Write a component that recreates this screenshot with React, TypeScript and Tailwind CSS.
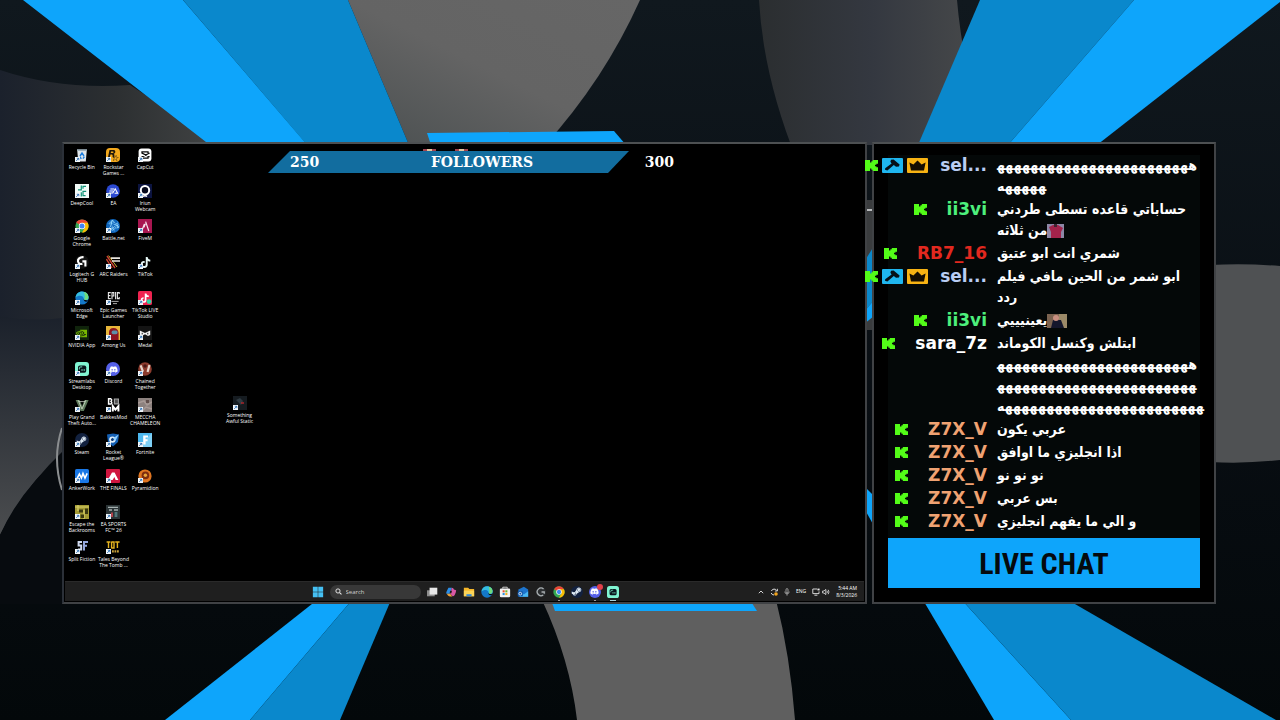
import type { ReactNode } from 'react';
import { FaBattleNet, FaDiscord, FaSteamSymbol, FaTiktok } from 'react-icons/fa6';
import { SiNvidia, SiRockstargames } from 'react-icons/si';

type Shortcut = {
  label: string[];
  icon: ReactNode;
};

type ChatMessage = {
  user: string;
  color: string;
  staff?: boolean;
  lines: string[];
  emote?: 'red' | 'dark';
};

const HEH = 'ه';
const JOINER = '\u200d';

function Tile({ className, children }: { className: string; children?: ReactNode }) {
  return (
    <span className={`flex size-full items-center justify-center overflow-hidden ${className}`}>{children}</span>
  );
}

function Glyph({ children }: { children: ReactNode }) {
  return (
    <svg viewBox="0 0 14 14" className="size-full" aria-hidden="true">
      {children}
    </svg>
  );
}

function ChromeIcon() {
  return (
    <Glyph>
      <circle cx="7" cy="7" r="6.6" fill="#34a853" />
      <path d="M7 7 L1.3 3.7 A6.6 6.6 0 0 1 12.7 3.7 Z" fill="#ea4335" />
      <path d="M7 3.7 H12.7 A6.6 6.6 0 0 1 7 13.6 L10 8.6 Z" fill="#fbbc05" />
      <circle cx="7" cy="7" r="3.2" fill="#fff" />
      <circle cx="7" cy="7" r="2.5" fill="#4285f4" />
    </Glyph>
  );
}

function EdgeIcon() {
  return (
    <Glyph>
      <circle cx="7" cy="7" r="6.6" fill="#1478c8" />
      <path d="M0.5 6.5 C1 2.5 4 0.4 7 0.4 C11 0.4 13.6 3.4 13.6 6.2 C13.6 8.6 11.8 9.6 9.8 9.4 C8 9.2 9 8.4 8.6 7 C7.6 4 3 4 0.5 6.5 Z" fill="#35bde0" />
      <path d="M8.7 7.6 C8 10.5 11 11.6 13.4 10 C12.4 8.7 9 10 8.7 7.6 Z" fill="#050c14" />
      <path d="M9 1 C13 1.8 13.8 5.2 13.2 7.6 C12 9.4 9.6 9.2 9.2 8.6 C10.6 6 9.4 3 9 1 Z" fill="#6fdc7b" />
    </Glyph>
  );
}

function StreamlabsIcon() {
  return (
    <Glyph>
      <rect width="14" height="14" rx="3" fill="#80f5d2" />
      <rect x="3" y="3.4" width="8.2" height="7.4" rx="1.8" fill="#09161d" />
      <path d="M4.4 7.4 V6.2 Q4.4 4.9 5.8 4.9 H7.2" fill="none" stroke="#80f5d2" strokeWidth="0.9" />
      <path d="M7 7.2 V8.8 M9.2 7.2 V8.8" stroke="#80f5d2" strokeWidth="1" />
    </Glyph>
  );
}

function DiscordIcon() {
  return (
    <Tile className="rounded-full bg-[#5560e8]">
      <FaDiscord className="size-[9px] text-white" />
    </Tile>
  );
}

function SteamIcon() {
  return (
    <Tile className="rounded-full bg-[#12213f]">
      <FaSteamSymbol className="size-[11px] text-[#dce8f2]" />
    </Tile>
  );
}

const shortcuts: Shortcut[] = [
  {
    label: ['Recycle Bin'],
    icon: (
      <Glyph>
        <path d="M2.2 2 H11.8 L10.8 13.4 H3.2 Z" fill="#dfe6ea" />
        <path d="M2 1.2 H12 V3 H2 Z" fill="#9fb0ba" />
        <path d="M5 8 L7 5 L9 8 M9.4 8.6 L8 10.6 M4.8 9 L6.4 10.8" fill="none" stroke="#1d7fe0" strokeWidth="1.4" />
      </Glyph>
    ),
  },
  {
    label: ['DeepCool'],
    icon: (
      <Glyph>
        <rect width="14" height="14" fill="#f2fbf8" />
        <path d="M6.3 1.6 V5.8 H3 M6.3 8.2 V12.4 M8 4.8 V2.4 H11 M11.2 7.4 H8 V11.6 H10.6" fill="none" stroke="#119478" strokeWidth="1.2" />
      </Glyph>
    ),
  },
  { label: ['Google', 'Chrome'], icon: <ChromeIcon /> },
  {
    label: ['Logitech G', 'HUB'],
    icon: (
      <Glyph>
        <circle cx="7" cy="7" r="6.8" fill="#121212" />
        <path d="M8.6 2.2 C4.6 1.8 2.6 4.4 3 6.4 C3.4 8.8 5.6 9.4 7.4 8.8 M7.4 6.4 H10.4 V11.4" fill="none" stroke="#fff" strokeWidth="2.1" />
      </Glyph>
    ),
  },
  { label: ['Microsoft', 'Edge'], icon: <EdgeIcon /> },
  {
    label: ['NVIDIA App'],
    icon: (
      <Tile className="bg-[#10240c]">
        <SiNvidia className="size-[11px] text-[#77b900]" />
      </Tile>
    ),
  },
  { label: ['Streamlabs', 'Desktop'], icon: <StreamlabsIcon /> },
  {
    label: ['Play Grand', 'Theft Auto...'],
    icon: (
      <Glyph>
        <path d="M0.6 2 H4.6 L7.2 8 L9.6 2 H13.6 L8.8 13 H5.6 Z" fill="#5e7a5c" />
        <path d="M3 2 L7 11 L11 2" fill="none" stroke="#c4d3bd" strokeWidth="0.9" />
        <path d="M4 3.6 H10" stroke="#e6ede0" strokeWidth="0.7" />
      </Glyph>
    ),
  },
  { label: ['Steam'], icon: <SteamIcon /> },
  {
    label: ['AnkerWork'],
    icon: (
      <Glyph>
        <rect width="14" height="14" rx="1.6" fill="#1a78e6" />
        <path d="M2 9.6 L4.4 5 L6.4 9 L8 4.4 L10 9 L12.2 4.4" fill="none" stroke="#fff" strokeWidth="1.6" />
      </Glyph>
    ),
  },
  {
    label: ['Escape the', 'Backrooms'],
    icon: (
      <Glyph>
        <rect width="14" height="14" fill="#a39a34" />
        <path d="M0 2 H14 M3 0 V6 M9 5 V14 M0 11 H5" stroke="#d8cf6b" strokeWidth="1.2" />
        <path d="M4 4.4 H8 V7.4 H4 Z M10 3.6 H13 V9 H10 Z M5.6 9.4 H9 V13 H5.6 Z" fill="#3a3810" />
      </Glyph>
    ),
  },
  {
    label: ['Split Fiction'],
    icon: (
      <Glyph>
        <path d="M7 2 H3.6 V5.6 H6.2 V9.6 H3" fill="none" stroke="#cfd9ee" strokeWidth="2" />
        <path d="M9 10.6 V2 H13 M9 5.8 H12" fill="none" stroke="#97a9de" strokeWidth="2" />
      </Glyph>
    ),
  },
  {
    label: ['Rockstar', 'Games ...'],
    icon: (
      <Tile className="rounded-sm bg-[#f3a81c]">
        <SiRockstargames className="size-[11px] text-[#20160a]" />
      </Tile>
    ),
  },
  {
    label: ['EA'],
    icon: (
      <Glyph>
        <circle cx="7" cy="7" r="6.8" fill="#2b49d2" />
        <path d="M4.4 5 H8 M3.4 7 H7 M2.8 9 H6.8 L9.2 4.8 L11.6 9.2 H8.6" fill="none" stroke="#fff" strokeWidth="1.1" />
      </Glyph>
    ),
  },
  {
    label: ['Battle.net'],
    icon: (
      <Tile className="rounded-full bg-[#0f66bd]">
        <FaBattleNet className="size-3 text-[#9adcff]" />
      </Tile>
    ),
  },
  {
    label: ['ARC Raiders'],
    icon: (
      <Glyph>
        <path d="M1 1 L9 13 M0.4 4 L6 13" stroke="#c9402f" strokeWidth="1.4" />
        <path d="M2.6 0.6 L11 12" stroke="#d9b23a" strokeWidth="1" />
        <path d="M5 3.2 H14 M6 6 H14" stroke="#e8e4de" strokeWidth="1.7" />
      </Glyph>
    ),
  },
  {
    label: ['Epic Games', 'Launcher'],
    icon: (
      <Glyph>
        <path d="M4.8 1.6 H2.4 V7.6 H4.8 M2.4 4.6 H4.4 M6 8.2 V1.6 H7.8 V5 H6 M9.6 1 V8.2 M13.2 3 V1.6 H11.4 V7.6 H13.2 V6" fill="none" stroke="#e6e6e6" strokeWidth="1.1" />
        <path d="M5.4 10.4 H12.6 M7 12.6 H11" stroke="#a8a8a8" strokeWidth="1" />
      </Glyph>
    ),
  },
  {
    label: ['Among Us'],
    icon: (
      <Glyph>
        <rect width="14" height="14" fill="#e8b63a" />
        <path d="M3 14 V6 Q3.4 2 7.4 2 Q12 2 12.6 7 V14 Z" fill="#8e1420" />
        <rect x="5.6" y="4.6" width="6" height="3.6" rx="1.6" fill="#5d90a8" />
        <path d="M0 11 H5 V14 H0 Z" fill="#40101a" />
      </Glyph>
    ),
  },
  { label: ['Discord'], icon: <DiscordIcon /> },
  {
    label: ['BakkesMod'],
    icon: (
      <Glyph>
        <path d="M2.6 0.8 V6 H5 Q6.6 4.8 5 3.4 Q6.4 1.6 4.8 0.8 Z" fill="none" stroke="#fff" strokeWidth="1.5" />
        <path d="M8.4 1 H12.4 V5.8 H8.4 Z" fill="#555" stroke="#a3a3a3" strokeWidth="1.2" />
        <path d="M6.8 13.6 V8.2 L9.4 11.6 L12.4 8.2 V13.6" fill="none" stroke="#fff" strokeWidth="2" />
      </Glyph>
    ),
  },
  {
    label: ['Rocket', 'League®'],
    icon: (
      <Glyph>
        <path d="M1 1.6 L7 0.4 L13 1.6 L12 9 L7 13.6 L2 9 Z" fill="#1560b4" />
        <circle cx="6.4" cy="6.6" r="3.2" fill="#e3eff9" />
        <path d="M12.6 1.4 L6 6 L9.4 8 Z" fill="#8ed0ff" />
        <path d="M6.4 4.8 L8 6.2 L7.2 8 H5.6 L4.8 6.2 Z" fill="#0b3a78" />
      </Glyph>
    ),
  },
  {
    label: ['THE FINALS'],
    icon: (
      <Glyph>
        <rect width="14" height="14" rx="1" fill="#d0153f" />
        <path d="M1.8 11 L6 3.4 H8.6 L12.4 11 H9.6 L8.4 8 L6.6 11 Z" fill="#fff" />
      </Glyph>
    ),
  },
  {
    label: ['EA SPORTS', 'FC™ 26'],
    icon: (
      <Glyph>
        <rect width="14" height="14" fill="#2b3436" />
        <path d="M2 2.4 H12 M3 5 H6 M8 5 H12" stroke="#a5b0b0" strokeWidth="1.3" />
        <path d="M5 7.4 H7 V12 H5 Z" fill="#b2434b" />
        <path d="M8.6 7 H11.4 V12 H8.6 Z" fill="#52777a" />
      </Glyph>
    ),
  },
  {
    label: ['Tales Beyond', 'The Tomb ...'],
    icon: (
      <Glyph>
        <path d="M0.6 2 H4.4 M2.5 2 V8 M5.6 8.6 V1.4 M5.6 2 H8 V8 H5.6 M9.2 2 H13.6 M11.4 2 V8" fill="none" stroke="#e3b21f" strokeWidth="1.4" />
        <path d="M6 11.4 H13" stroke="#c8a03a" strokeWidth="2.4" strokeDasharray="1.8 0.7" />
      </Glyph>
    ),
  },
  {
    label: ['CapCut'],
    icon: (
      <Glyph>
        <rect x="0.6" y="0.6" width="12.8" height="12.8" rx="3" fill="#fff" />
        <path d="M10 5 V3.8 H4 V5 L11.6 9 M10 9 V10.2 H4 V9 L11.6 5" fill="none" stroke="#0a0a0a" strokeWidth="1.3" />
      </Glyph>
    ),
  },
  {
    label: ['Iriun', 'Webcam'],
    icon: (
      <Glyph>
        <rect width="14" height="14" fill="#0c1440" />
        <circle cx="7" cy="6.2" r="4.2" fill="#05081c" stroke="#fff" strokeWidth="2" />
        <path d="M5 12.6 Q7 10.8 9 12.6" fill="none" stroke="#fff" strokeWidth="1.4" />
      </Glyph>
    ),
  },
  {
    label: ['FiveM'],
    icon: (
      <Glyph>
        <rect width="14" height="14" fill="#a81650" />
        <path d="M7.6 2.6 L10.8 12 M6.4 5 L4.2 10.8 M7.4 4.6 L6 8.4" stroke="#f7e2ec" strokeWidth="1.2" />
      </Glyph>
    ),
  },
  {
    label: ['TikTok'],
    icon: (
      <Tile className="bg-black">
        <FaTiktok className="size-[11px] text-[#e7f8f7]" />
      </Tile>
    ),
  },
  {
    label: ['TikTok LIVE', 'Studio'],
    icon: (
      <Glyph>
        <rect width="14" height="14" rx="1.6" fill="#ef2350" />
        <path d="M7.6 2.6 V9 A2 2 0 1 1 5.6 7 M7.6 3 Q8.6 5.4 10.8 5.4" fill="none" stroke="#fff" strokeWidth="1.7" />
        <circle cx="11" cy="10.6" r="2.4" fill="#2fd6a4" />
      </Glyph>
    ),
  },
  {
    label: ['Medal'],
    icon: (
      <Glyph>
        <rect width="14" height="14" fill="#141414" />
        <path d="M1.8 4.4 L7 7 L12.2 4.4 V9 L10 10 L7 8.2 L4 10 L1.8 9 Z" fill="#f2f2f2" />
        <path d="M4.2 6.8 V8.4 M9.8 6.8 V8.4" stroke="#141414" strokeWidth="1" />
      </Glyph>
    ),
  },
  {
    label: ['Chained', 'Together'],
    icon: (
      <Glyph>
        <circle cx="7" cy="7" r="6.8" fill="#8c3c2e" />
        <path d="M2.6 3.4 L5 9.6 M11.4 3 L9.6 10" stroke="#e6d5ca" strokeWidth="2.2" />
        <circle cx="7" cy="4" r="1.8" fill="#4a1814" />
      </Glyph>
    ),
  },
  {
    label: ['MECCHA', 'CHAMELEON'],
    icon: (
      <Glyph>
        <rect width="14" height="14" fill="#8c817e" />
        <path d="M0 5 L6 3 L9 7 L14 4 M3 14 L8 9 L14 11" fill="none" stroke="#a89a96" strokeWidth="1.5" />
        <path d="M8 2 H11 V5 H8 Z" fill="#5f4d4a" />
      </Glyph>
    ),
  },
  {
    label: ['Fortnite'],
    icon: (
      <Glyph>
        <rect width="14" height="14" fill="#4cb7ee" />
        <path d="M0 14 L14 0 V14 Z" fill="#7ed0f6" />
        <path d="M5.2 2.4 H10 V4.6 H7.6 V6.2 H9.6 V8.2 H7.6 V11.6 H5.2 Z" fill="#fff" />
      </Glyph>
    ),
  },
  {
    label: ['Pyramidion'],
    icon: (
      <Glyph>
        <circle cx="7" cy="7" r="6.6" fill="#de7420" />
        <circle cx="7.4" cy="6.4" r="3.8" fill="#7c2c10" />
        <circle cx="7.4" cy="6.2" r="1.7" fill="#e8a43a" />
      </Glyph>
    ),
  },
];

const messages: ChatMessage[] = [
  { user: 'sel...', color: 'text-[#b9cdf3]', staff: true, lines: [HEH.repeat(24) + JOINER, JOINER + HEH.repeat(6)] },
  { user: 'ii3vi', color: 'text-[#4df07c]', lines: ['حساباتي قاعده تسطى طردني', 'من ثلاثه'], emote: 'red' },
  { user: 'RB7_16', color: 'text-[#e2281f]', lines: ['شمري انت ابو عتيق'] },
  { user: 'sel...', color: 'text-[#b9cdf3]', staff: true, lines: ['ابو شمر من الحين مافي فيلم', 'ردد'] },
  { user: 'ii3vi', color: 'text-[#4df07c]', lines: ['يعينيييي'], emote: 'dark' },
  {
    user: 'sara_7z',
    color: 'text-white',
    lines: [
      'ابتلش وكنسل الكوماند',
      HEH.repeat(24) + JOINER,
      JOINER + HEH.repeat(24) + JOINER,
      JOINER + HEH.repeat(25),
    ],
  },
  { user: 'Z7X_V', color: 'text-[#f0a272]', lines: ['عربي يكون'] },
  { user: 'Z7X_V', color: 'text-[#f0a272]', lines: ['اذا انجليزي ما اوافق'] },
  { user: 'Z7X_V', color: 'text-[#f0a272]', lines: ['نو نو نو'] },
  { user: 'Z7X_V', color: 'text-[#f0a272]', lines: ['بس عربي'] },
  { user: 'Z7X_V', color: 'text-[#f0a272]', lines: ['و الي ما يفهم انجليزي'] },
];

function Backdrop() {
  return (
    <svg
      viewBox="0 0 1280 720"
      preserveAspectRatio="xMidYMid slice"
      className="absolute inset-0 -z-10 size-full"
      aria-hidden="true"
    >
      <defs>
        <linearGradient id="night" x1="0" y1="0" x2="0" y2="1">
          <stop offset="0" stopColor="#10181e" />
          <stop offset="0.6" stopColor="#080d12" />
          <stop offset="1" stopColor="#03080a" />
        </linearGradient>
        <linearGradient id="slate" x1="0" y1="0" x2="1" y2="0">
          <stop offset="0" stopColor="#1b212c" />
          <stop offset="0.5" stopColor="#2c2f31" />
          <stop offset="1" stopColor="#444646" />
        </linearGradient>
        <linearGradient id="stone" x1="0" y1="1" x2="1" y2="0">
          <stop offset="0" stopColor="#4a4f50" />
          <stop offset="0.5" stopColor="#646464" />
          <stop offset="1" stopColor="#666" />
        </linearGradient>
        <linearGradient id="smoke" x1="0" y1="0" x2="1" y2="0">
          <stop offset="0" stopColor="#2b2e30" />
          <stop offset="0.5" stopColor="#343840" />
          <stop offset="1" stopColor="#484a4b" />
        </linearGradient>
        <linearGradient id="side" x1="0" y1="0" x2="0" y2="1">
          <stop offset="0" stopColor="#1b212b" />
          <stop offset="1" stopColor="#4b4d4f" />
        </linearGradient>
      </defs>
      <rect width="1280" height="720" fill="url(#night)" />
      <path d="M0 70 Q60 90 130 85 L230 150 V330 H0 Z" fill="url(#slate)" />
      <path d="M0 316 Q30 322 62 318 V455 Q20 490 0 535 Z" fill="url(#side)" />
      <path d="M0 535 Q24 488 62 452 V604 H0 Z" fill="#070b0f" />
      <path d="M62 428 Q52 458 62 490" fill="none" stroke="#8b8e90" strokeWidth="2" />
      <path d="M348 0 H640 Q604 80 545 145 H409 Z" fill="url(#stone)" />
      <path d="M759 0 H957 Q962 60 985 145 H791 Q763 70 759 0 Z" fill="url(#smoke)" />
      <path d="M1210 265 Q1245 263 1280 266 V460 Q1245 464 1210 462 Z" fill="#4f5153" />
      <path d="M542 600 Q570 660 577 720 H795 Q790 655 776 600 Z" fill="#5f5f5f" />
      <path d="M860 200 H880 V330 H860 Z" fill="#3a3c3e" />
      <path d="M860 210 H880" stroke="#b9bbbd" strokeWidth="2" />

      <path d="M23 0 H183 L305 142 V150 H215 L206 142 Z" fill="#0ea5fb" />
      <path d="M183 0 H348 L409 145 L307 145 Z" fill="#0a88cc" />
      <path d="M980 0 H1134 L1008 145 H918 Z" fill="#0a88cc" />
      <path d="M1134 0 H1280 V2 L1097 145 H1008 Z" fill="#0ea5fb" />
      <path d="M427 133 L614 131 L626 145 H431 Z" fill="#0ea5fb" />
      <path d="M874 246 V300 L864 312 V262 Z" fill="#0a88cc" />
      <path d="M874 300 V316 L864 324 V312 Z" fill="#0ea5fb" />
      <path d="M864 486 L874 496 V526 L864 508 Z" fill="#0ea5fb" />
      <path d="M317 600 H352 L250 720 H165 Z" fill="#0ea5fb" />
      <path d="M352 600 H391 L340 720 H250 Z" fill="#0a88cc" />
      <path d="M551 600 H750 L757 611 H555 Z" fill="#0ea5fb" />
      <path d="M923 600 H962 L1071 720 H994 Z" fill="#0ea5fb" />
      <path d="M962 600 H1068 L1276 720 H1071 Z" fill="#0a88cc" />
    </svg>
  );
}

function ShortcutArrow() {
  return (
    <svg viewBox="0 0 5 5" className="absolute bottom-0 left-0 size-[5px]" aria-hidden="true">
      <rect width="5" height="5" fill="#f4f8fb" />
      <path d="M1.2 4 L3.6 1.4 M1.8 1.3 H3.8 V3.2" fill="none" stroke="#1b62ad" strokeWidth="0.8" />
    </svg>
  );
}

function DesktopShortcut({ label, icon }: Shortcut) {
  return (
    <button type="button" className="flex flex-col items-center gap-[2px] text-[5px] leading-[6px] text-white">
      <span className="relative block size-[14px]">
        {icon}
        <ShortcutArrow />
      </span>
      <span className="whitespace-nowrap">
        {label.map((line) => (
          <span key={line} className="block">
            {line}
          </span>
        ))}
      </span>
    </button>
  );
}

function FollowerGoal() {
  return (
    <div className="absolute top-[6px] left-[203px] flex h-[22px] w-[406px] items-center justify-between pl-[22px] font-['DejaVu_Serif',serif] text-sm font-bold text-white">
      <div className="absolute inset-y-0 left-0 -z-10 w-[361px] bg-[#126d9f] [clip-path:polygon(22px_0,100%_0,340px_100%,0_100%)]" />
      <svg viewBox="0 0 45 2" className="absolute -top-[2px] left-[155px] h-[2px] w-[45px]" aria-hidden="true">
        <path d="M0 1 H13 M32 1 H45" stroke="#a4434f" strokeWidth="2" />
        <path d="M4 1 H9 M36 1 H41" stroke="#e3c7a0" strokeWidth="2" />
      </svg>
      <span>250</span>
      <span>FOLLOWERS</span>
      <span>300</span>
    </div>
  );
}

function TaskButton({ label, active, children }: { label: string; active?: 'dot' | 'bar'; children: ReactNode }) {
  return (
    <button type="button" aria-label={label} className="relative size-3">
      {children}
      {active === 'dot' ? <span className="absolute -bottom-[3px] left-[5px] h-px w-[2px] bg-[#9a9a9a]" /> : null}
      {active === 'bar' ? <span className="absolute -bottom-[3px] left-[3px] h-px w-[6px] bg-[#a8cfd8]" /> : null}
    </button>
  );
}

function Taskbar() {
  return (
    <footer className="grid h-5 grid-cols-[1fr_auto_1fr] items-center border-t border-[#2a2a2a] bg-[#1f1f1f] text-white">
      <span />
      <div className="flex items-center gap-[6px] pl-px">
        <TaskButton label="Start">
          <Glyph>
            <path d="M1 1 H6.7 V6.7 H1 Z M7.3 1 H13 V6.7 H7.3 Z M1 7.3 H6.7 V13 H1 Z M7.3 7.3 H13 V13 H7.3 Z" fill="#45c0f3" />
          </Glyph>
        </TaskButton>
        <label className="flex h-[14px] w-[91px] items-center gap-1 rounded-full bg-[#383838] px-[5px]">
          <svg viewBox="0 0 8 8" className="size-[7px] shrink-0" aria-hidden="true">
            <circle cx="3.4" cy="3.4" r="2.4" fill="none" stroke="#e8e8e8" strokeWidth="1.1" />
            <path d="M5.2 5.2 L7.4 7.4" stroke="#e8e8e8" strokeWidth="1.2" />
          </svg>
          <input
            type="text"
            aria-label="Search"
            placeholder="Search"
            className="w-full bg-transparent text-[6px] leading-[8px] outline-none placeholder:text-[#cfcfcf]"
          />
        </label>
        <TaskButton label="Task view">
          <Glyph>
            <rect x="0" y="5" width="9" height="7" fill="#8d8d8d" />
            <rect x="3" y="2" width="9" height="8" fill="#e8e8e8" />
          </Glyph>
        </TaskButton>
        <TaskButton label="Copilot">
          <Glyph>
            <path d="M4 2 H8 L6 9 H2 Q1 9 1.6 7 Z" fill="#2b8fe8" />
            <path d="M8 2 Q10 2 10.4 4 L13 5 Q13 7 11.6 10 Q10.6 12.4 9 12 L6 9 Z" fill="#d958a4" />
            <path d="M2 9 H6 L8.6 12.2 H5.6 Q3.6 12 2 9 Z" fill="#e9a13a" />
            <path d="M6 5.6 H8.2 L7.4 8.6 H5.4 Z" fill="#1f1f1f" />
          </Glyph>
        </TaskButton>
        <TaskButton label="File Explorer">
          <Glyph>
            <path d="M1 2 H6 L7.4 3.6 H13 V12 H1 Z" fill="#f6b72a" />
            <path d="M1 5.4 H13 V12 H1 Z" fill="#fbd458" />
            <path d="M4 9.6 H10 V12 H4 Z" fill="#2f86d8" />
          </Glyph>
        </TaskButton>
        <TaskButton label="Edge">
          <EdgeIcon />
        </TaskButton>
        <TaskButton label="Store">
          <Glyph>
            <path d="M4.4 3 V1.4 H9.6 V3" fill="none" stroke="#e6e6e6" strokeWidth="1" />
            <rect x="1" y="3" width="12" height="10" rx="1.4" fill="#f3f3f3" />
            <path d="M4.2 5 H6.6 V7.4 H4.2 Z" fill="#e8502e" />
            <path d="M7.4 5 H9.8 V7.4 H7.4 Z" fill="#6bb52e" />
            <path d="M4.2 8.2 H6.6 V10.6 H4.2 Z" fill="#2a92e0" />
            <path d="M7.4 8.2 H9.8 V10.6 H7.4 Z" fill="#f0b01e" />
          </Glyph>
        </TaskButton>
        <TaskButton label="Outlook">
          <Glyph>
            <path d="M1.6 4 L8 1 L13 4 V12.6 H1.6 Z" fill="#1d74cc" />
            <path d="M3 7 L8 10 L13 6 V12.6 H3 Z" fill="#49b8f4" />
            <rect x="0.8" y="6" width="6" height="6" rx="1" fill="#0f56a8" />
            <circle cx="3.8" cy="9" r="1.6" fill="none" stroke="#fff" strokeWidth="0.9" />
          </Glyph>
        </TaskButton>
        <TaskButton label="Logitech G HUB">
          <Glyph>
            <circle cx="7" cy="7" r="5.8" fill="#2c2f31" />
            <path d="M10 3.6 A4.4 4.4 0 1 0 9.6 10.4 M7.6 7 H10.8 V9" fill="none" stroke="#a9afb1" strokeWidth="1.5" />
          </Glyph>
        </TaskButton>
        <TaskButton label="Chrome" active="dot">
          <ChromeIcon />
        </TaskButton>
        <TaskButton label="Steam">
          <SteamIcon />
        </TaskButton>
        <TaskButton label="Discord" active="dot">
          <DiscordIcon />
          <span className="absolute -top-[2px] -right-[2px] size-[6px] rounded-full bg-[#e2414b]" />
        </TaskButton>
        <TaskButton label="Streamlabs" active="bar">
          <StreamlabsIcon />
        </TaskButton>
      </div>
      <div className="flex items-center justify-end gap-[6px] pr-[7px] text-[5px] leading-[7px]">
        <svg viewBox="0 0 6 6" className="size-[6px]" aria-hidden="true">
          <path d="M0.8 4.2 L3 2 L5.2 4.2" fill="none" stroke="#e8e8e8" strokeWidth="0.9" />
        </svg>
        <svg viewBox="0 0 8 8" className="size-2" aria-hidden="true">
          <path d="M6.8 2.6 A3 3 0 0 0 1.4 3 M1.2 5 A3 3 0 0 0 4 7" fill="none" stroke="#e0e0e0" strokeWidth="1" />
          <path d="M7.4 0.8 V3 H5" fill="none" stroke="#e0e0e0" strokeWidth="0.9" />
          <circle cx="6" cy="6" r="1.8" fill="#f2a51f" />
        </svg>
        <svg viewBox="0 0 6 8" className="h-2 w-[6px]" aria-hidden="true">
          <rect x="2" y="0.6" width="2" height="4" rx="1" fill="none" stroke="#cfcfcf" strokeWidth="0.7" />
          <path d="M0.8 3.6 Q0.8 5.8 3 5.8 Q5.2 5.8 5.2 3.6 M3 5.8 V7.6" fill="none" stroke="#cfcfcf" strokeWidth="0.7" />
        </svg>
        <span>ENG</span>
        <span className="flex gap-[2px]">
          <svg viewBox="0 0 8 8" className="size-2" aria-hidden="true">
            <path d="M5 1 H0.8 V5.6 H7 V3.4 M2.4 7.2 H5.4" fill="none" stroke="#e8e8e8" strokeWidth="0.9" />
            <rect x="5.4" y="0.6" width="2.2" height="1.8" fill="#e8e8e8" />
          </svg>
          <svg viewBox="0 0 8 8" className="size-2" aria-hidden="true">
            <path d="M0.6 3 H2 L3.8 1.4 V6.6 L2 5 H0.6 Z" fill="none" stroke="#e8e8e8" strokeWidth="0.8" />
            <path d="M5 2.8 Q5.8 4 5 5.2 M6.2 1.8 Q7.8 4 6.2 6.2" fill="none" stroke="#e8e8e8" strokeWidth="0.8" />
          </svg>
        </span>
        <time className="text-right">
          <span className="block">5:44 AM</span>
          <span className="block">8/3/2026</span>
        </time>
      </div>
    </footer>
  );
}

function KickBadge() {
  return (
    <svg viewBox="0 0 13 11" className="h-[11px] w-[13px] shrink-0" aria-label="Kick">
      <path d="M0 0 H5 V2.6 H6.4 V1.2 H7.8 V0 H13 V3.8 H11.4 V4.8 H10 V6.2 H11.4 V7.2 H13 V11 H7.8 V9.8 H6.4 V8.4 H5 V11 H0 Z" fill="#53fc18" />
    </svg>
  );
}

function StaffBadges() {
  return (
    <>
      <svg viewBox="0 0 21 15" className="h-[15px] w-[21px] shrink-0" aria-label="Moderator">
        <rect width="21" height="15" rx="1" fill="#1fb6ef" />
        <path d="M9 1.8 L11.6 1.4 L17.6 6.4 L17 8.6 L14 8.8 L11.8 7 L5.4 12.4 L3 11.8 L3.2 10.2 L9.6 5.4 L8.4 3.8 Z" fill="#061017" />
      </svg>
      <svg viewBox="0 0 21 15" className="h-[15px] w-[21px] shrink-0" aria-label="Broadcaster">
        <rect width="21" height="15" rx="1" fill="#f8b313" />
        <path d="M2.4 4.6 L6.4 6.4 L10.5 2.4 L14.6 6.4 L18.6 4.6 L17 12.4 H4 Z" fill="#140d02" />
      </svg>
    </>
  );
}

function Emote({ kind }: { kind: 'red' | 'dark' }) {
  if (kind === 'red') {
    return (
      <svg viewBox="0 0 17 14" className="h-[14px] w-[17px]" aria-hidden="true">
        <rect width="17" height="14" fill="#8d87a6" />
        <path d="M2 3 L6 1 H11 L16 4 L14 8 V14 H4 V8 Z" fill="#a3234b" />
        <rect x="7" width="3" height="3" fill="#3d2430" />
      </svg>
    );
  }
  return (
    <svg viewBox="0 0 20 14" className="h-[14px] w-5" aria-hidden="true">
      <rect width="20" height="14" fill="#7b6350" />
      <rect x="12" width="8" height="14" fill="#9c8a68" />
      <path d="M4 14 L6 6 H14 L17 14 Z" fill="#14162c" />
      <circle cx="9" cy="4" r="3" fill="#c98f80" />
    </svg>
  );
}

function ChatRow({ user, color, staff, lines, emote }: ChatMessage) {
  return (
    <li className="grid grid-cols-[99px_1fr] gap-x-[10px] leading-[21px]">
      <div className="flex h-[21px] items-center justify-end gap-1">
        <KickBadge />
        {staff ? <StaffBadges /> : null}
        <span className={`text-[17px] font-bold ${staff ? 'ml-2' : 'ml-4'} ${color}`}>{user}</span>
      </div>
      <div className="font-['DejaVu_Sans_Condensed','DejaVu_Sans',sans-serif] text-sm leading-[21px] font-bold whitespace-nowrap text-white">
        {lines.map((line, index) => (
          <p key={index} className="flex h-[21px] items-center">
            <span dir="rtl">{line}</span>
            {emote && index === lines.length - 1 ? <Emote kind={emote} /> : null}
          </p>
        ))}
      </div>
    </li>
  );
}

export default function App() {
  return (
    <main className="relative isolate min-h-screen overflow-hidden bg-[#080d12] pt-[142px] pr-16 pb-[116px] pl-[62px] font-['Open_Sans',sans-serif]">
      <Backdrop />
      <div className="flex gap-[5px]">
        <section className="flex min-w-0 flex-1 flex-col border-2 border-t-[#4d5052] border-r-[#404245] border-b-[#404245] border-l-[#2b3038] bg-black p-px">
          <div className="relative isolate flex-1 pt-[3px] pl-px">
            <div className="grid h-[428px] w-[95px] grid-flow-col grid-cols-3 grid-rows-12">
              {shortcuts.map((item) => (
                <DesktopShortcut key={item.label.join(' ')} {...item} />
              ))}
            </div>
            <FollowerGoal />
            <div className="absolute top-[251px] left-[161px] w-8">
              <DesktopShortcut
                label={['Something', 'Awful Static']}
                icon={
                  <Glyph>
                    <rect width="14" height="14" fill="#151b20" />
                    <path d="M3 4 L7 2 L10 5 L8 9 Z" fill="#2f3b42" />
                    <path d="M8 7 H11" stroke="#b3262b" strokeWidth="1.4" />
                  </Glyph>
                }
              />
            </div>
          </div>
          <Taskbar />
        </section>

        <section className="w-[344px] shrink-0 border-2 border-t-[#4d5052] border-r-[#404245] border-b-[#404245] border-l-[#404245] bg-black px-[14px] pt-[11px] pb-[14px]">
          <ul className="flex h-[383px] flex-col gap-[2px] bg-[#040808] font-['DejaVu_Sans',sans-serif]">
            {messages.map((message, index) => (
              <ChatRow key={index} {...message} />
            ))}
          </ul>
          <h2 className="flex h-[50px] items-center justify-center bg-[#0ea5fb] font-['Liberation_Sans_Narrow','Roboto_Condensed',sans-serif] text-[30px] font-bold text-[#050a0e]">
            LIVE CHAT
          </h2>
        </section>
      </div>
    </main>
  );
}
